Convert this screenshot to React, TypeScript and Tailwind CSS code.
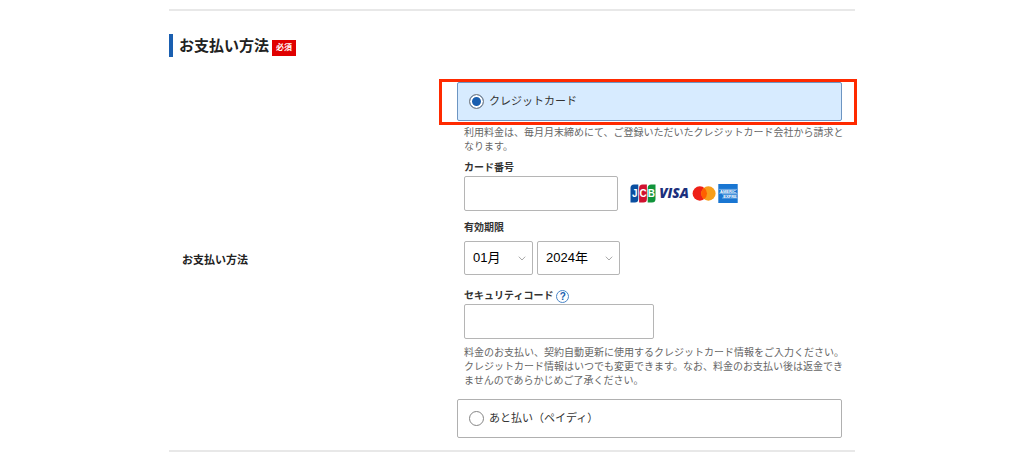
import { useState } from "react";
import type { ReactNode } from "react";

type Method = "card" | "paidy";

const months = ["01月", "02月", "03月", "04月", "05月", "06月", "07月", "08月", "09月", "10月", "11月", "12月"];
const years = ["2024年", "2025年", "2026年", "2027年", "2028年"];

function PaymentOption({
  value,
  checked,
  onSelect,
  children,
}: {
  value: Method;
  checked: boolean;
  onSelect: (value: Method) => void;
  children: ReactNode;
}) {
  return (
    <label
      className={`flex h-[39px] cursor-pointer items-center gap-[5px] rounded-xs border pl-[11px] text-[11px] ${
        checked ? "border-[#6d95c2] bg-[#d7ebff]" : "border-[#b0b0b0] bg-white"
      }`}
    >
      <input
        type="radio"
        name="method"
        value={value}
        checked={checked}
        onChange={() => onSelect(value)}
        className="size-[15px] appearance-none rounded-full border border-[#858585] bg-white checked:bg-[#1a5fb0] checked:shadow-[inset_0_0_0_2px_#fff]"
      />
      {children}
    </label>
  );
}

function SelectBox({ label, options, className }: { label: string; options: string[]; className: string }) {
  return (
    <div className={`relative ${className}`}>
      <select
        aria-label={label}
        className="h-[34px] w-full appearance-none rounded-xs border border-[#b5b5b5] bg-white pl-2 text-[13px] text-black"
      >
        {options.map((option) => (
          <option key={option}>{option}</option>
        ))}
      </select>
      <svg
        viewBox="0 0 8 5"
        className="pointer-events-none absolute top-[15px] right-[7px] h-[5px] w-2"
        fill="none"
        stroke="#a8a8a8"
        strokeWidth="1"
      >
        <path d="M0.8 0.7 L4 4 L7.2 0.7" />
      </svg>
    </div>
  );
}

function JcbLogo() {
  return (
    <svg viewBox="0 0 26 19" className="h-[19px] w-[26px]" role="img" aria-label="JCB">
      <path d="M4 0.5H8.3V15Q8.3 18.5 4.8 18.5H0.5V4Q0.5 0.5 4 0.5Z" fill="#0a4fa0" />
      <path d="M12.6 0.5H16.9V15Q16.9 18.5 13.4 18.5H9.1V4Q9.1 0.5 12.6 0.5Z" fill="#d0112f" />
      <path d="M21.2 0.5H25.5V15Q25.5 18.5 22 18.5H17.7V4Q17.7 0.5 21.2 0.5Z" fill="#10933a" />
      <g fill="#fff" fontFamily="Liberation Sans, sans-serif" fontSize="10" fontWeight="700" textAnchor="middle">
        <text x="4.8" y="13">J</text>
        <text x="13" y="13">C</text>
        <text x="21.4" y="13">B</text>
      </g>
    </svg>
  );
}

function VisaLogo() {
  return (
    <svg viewBox="0 0 32 19" className="h-[19px] w-8" role="img" aria-label="VISA">
      <text
        x="16"
        y="14"
        textAnchor="middle"
        fill="#1b2f7c"
        fontFamily="Open Sans, sans-serif"
        fontSize="13.5"
        fontStyle="italic"
        fontWeight="800"
      >
        VISA
      </text>
    </svg>
  );
}

function MastercardLogo() {
  return (
    <svg viewBox="0 0 24 19" className="h-[19px] w-6" role="img" aria-label="Mastercard">
      <circle cx="7.8" cy="9.5" r="7.2" fill="#ee2018" />
      <circle cx="16.4" cy="9.5" r="7.2" fill="#f79e1b" />
      <path d="M12.1 3.73A7.2 7.2 0 0 1 12.1 15.27A7.2 7.2 0 0 1 12.1 3.73Z" fill="#ff5f00" />
    </svg>
  );
}

function AmexLogo() {
  return (
    <svg viewBox="0 0 20 19" className="h-[19px] w-5" role="img" aria-label="American Express">
      <rect x="0.3" width="19.4" height="19" fill="#1976d2" />
      <g fill="#fff" fontFamily="Liberation Sans, sans-serif" fontSize="4" fontWeight="700" textAnchor="middle">
        <text x="10" y="8.8">AMERIC</text>
        <text x="12" y="13.6">EXPRE</text>
      </g>
      <g stroke="#fff" strokeWidth="0.6">
        <path d="M1 5.4H19M1 9.3H19M4 10H19.5M4 14H19.5" opacity="0.7" />
      </g>
    </svg>
  );
}

export default function App() {
  const [method, setMethod] = useState<Method>("card");

  return (
    <main
      lang="ja"
      className="mx-auto max-w-[686px] bg-white pt-[9px] font-['Liberation_Sans','Noto_Sans_CJK_JP',sans-serif] text-[#333]"
    >
      <section className="border-y-2 border-[#e8e8e8] pt-[23px] pb-3">
        <div className="flex h-[23px] items-center gap-[3px] border-l-4 border-[#1a5fb0] pl-[6px]">
          <h2 className="text-[15px] leading-[23px] font-bold text-[#222]">お支払い方法</h2>
          <span className="mt-1 bg-[#e00000] px-1 text-[8px] leading-4 font-bold text-white">必須</span>
        </div>

        <div className="mt-[25px] flex items-center" role="radiogroup" aria-labelledby="method-label">
          <div id="method-label" className="w-72 shrink-0 pl-[13px] text-[11px] font-bold text-[#222]">
            お支払い方法
          </div>

          <div className="min-w-0 flex-1 pr-[13px]">
            <div className="relative">
              <PaymentOption value="card" checked={method === "card"} onSelect={setMethod}>
                クレジットカード
              </PaymentOption>
              <div className="pointer-events-none absolute -top-[3px] -right-[15px] -bottom-1 -left-[18px] border-3 border-[#ff2a00]" />
            </div>

            <div className="-mr-1 pl-[7px] text-[10px] leading-[14px]">
              <p className="mt-[5px] text-[#666]">
                利用料金は、毎月月末締めにて、ご登録いただいたクレジットカード会社から請求となります。
              </p>

              <label htmlFor="card-number" className="mt-[7px] block font-bold">
                カード番号
              </label>
              <div className="mt-px flex items-center">
                <input
                  id="card-number"
                  type="text"
                  inputMode="numeric"
                  className="h-[35px] w-[154px] rounded-xs border border-[#b5b5b5] px-2 text-[13px]"
                />
                <div className="ml-3 flex items-center gap-0.5">
                  <JcbLogo />
                  <VisaLogo />
                  <MastercardLogo />
                  <AmexLogo />
                </div>
              </div>

              <div className="mt-[10px] font-bold">有効期限</div>
              <div className="mt-[6px] flex gap-1">
                <SelectBox label="有効期限（月）" options={months} className="w-[69px]" />
                <SelectBox label="有効期限（年）" options={years} className="w-[83px]" />
              </div>

              <div className="mt-[14px] flex items-center gap-[3px]">
                <label htmlFor="security-code" className="font-bold">
                  セキュリティコード
                </label>
                <button
                  type="button"
                  className="size-[13px] rounded-full border border-[#4a86c8] text-center text-[10px] leading-[11px] font-bold text-[#1a5fb0]"
                >
                  ?
                </button>
              </div>
              <input
                id="security-code"
                type="text"
                inputMode="numeric"
                className="mt-px block h-[35px] w-[190px] rounded-xs border border-[#b5b5b5] px-2 text-[13px]"
              />

              <p className="mt-[7px] mb-[11px] text-[#666]">
                料金のお支払い、契約自動更新に使用するクレジットカード情報をご入力ください。クレジットカード情報はいつでも変更できます。なお、料金のお支払い後は返金できませんのであらかじめご了承ください。
              </p>
            </div>

            <PaymentOption value="paidy" checked={method === "paidy"} onSelect={setMethod}>
              あと払い（ペイディ）
            </PaymentOption>
          </div>
        </div>
      </section>
    </main>
  );
}
